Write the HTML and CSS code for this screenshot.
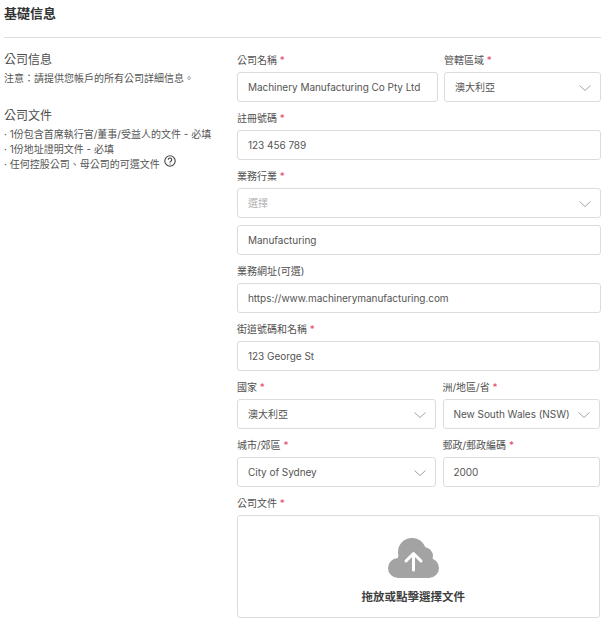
FILE: index.html
```html
<!DOCTYPE html>
<html lang="zh-Hant">
<head>
<meta charset="utf-8">
<title>基礎信息</title>
<link rel="stylesheet" href="styles.css">
</head>
<body>
<main class="page">
  <h1 class="title">基礎信息</h1>
  <div class="content">
    <aside class="info">
      <h2 class="info-head">公司信息</h2>
      <p class="info-text">注意：請提供您帳戶的所有公司詳細信息。</p>
      <h2 class="info-head second">公司文件</h2>
      <p class="info-text">· 1份包含首席執行官/董事/受益人的文件 - 必填</p>
      <p class="info-text">· 1份地址證明文件 - 必填</p>
      <p class="info-text">· 任何控股公司、母公司的可選文件
        <svg class="help" viewBox="0 0 12 12" width="12" height="12"><circle cx="6" cy="6" r="5.200" fill="none" stroke="#444" stroke-width="1.100"/><path d="M4.300 4.800a1.700 1.700 0 1 1 2.600 1.400c-.6.400-.9.800-.9 1.300" fill="none" stroke="#444" stroke-width="1.100"/><circle cx="6" cy="9.100" r=".6" fill="#444"/></svg>
      </p>
    </aside>
    <form class="form">
      <div class="row row-top">
        <div class="field"><label class="label">公司名稱 <em>*</em></label><div class="control">Machinery Manufacturing Co Pty Ltd</div></div>
        <div class="field"><label class="label">管轄區域 <em>*</em></label><div class="control select">澳大利亞<svg class="chev" viewBox="0 0 12 6"><path d="M.5.5 6 5.500 11.500.5"/></svg></div></div>
      </div>
      <div class="field"><label class="label">註冊號碼 <em>*</em></label><div class="control">123 456 789</div></div>
      <div class="field"><label class="label">業務行業 <em>*</em></label>
        <div class="control select muted tight">選擇<svg class="chev" viewBox="0 0 12 6"><path d="M.5.5 6 5.500 11.500.5"/></svg></div>
        <div class="control">Manufacturing</div>
      </div>
      <div class="field"><label class="label">業務網址(可選)</label><div class="control">https://www.machinerymanufacturing.com</div></div>
      <div class="narrow">
        <div class="field"><label class="label">街道號碼和名稱 <em>*</em></label><div class="control">123 George St</div></div>
        <div class="row row-low">
          <div class="field"><label class="label">國家 <em>*</em></label><div class="control select">澳大利亞<svg class="chev" viewBox="0 0 12 6"><path d="M.5.5 6 5.500 11.500.5"/></svg></div></div>
          <div class="field"><label class="label">洲/地區/省 <em>*</em></label><div class="control select">New South Wales (NSW)<svg class="chev" viewBox="0 0 12 6"><path d="M.5.5 6 5.500 11.500.5"/></svg></div></div>
        </div>
        <div class="row row-low">
          <div class="field"><label class="label">城市/郊區 <em>*</em></label><div class="control select">City of Sydney<svg class="chev" viewBox="0 0 12 6"><path d="M.5.5 6 5.500 11.500.5"/></svg></div></div>
          <div class="field"><label class="label">郵政/郵政編碼 <em>*</em></label><div class="control">2000</div></div>
        </div>
        <div class="field"><label class="label">公司文件 <em>*</em></label>
          <div class="upload">
            <svg class="cloud" viewBox="0 0 51 40" width="51" height="40"><g fill="#a3a3a3"><circle cx="10" cy="30" r="10"/><circle cx="24" cy="14" r="14"/><circle cx="36" cy="18" r="9"/><circle cx="41" cy="30" r="10"/><rect x="10" y="18" width="31" height="22"/></g><path fill="none" stroke="#fff" stroke-width="3" stroke-linecap="round" stroke-linejoin="round" d="M25.500 32V16M18 23l7.500-7.500L33 23"/></svg>
            <span class="upload-text">拖放或點擊選擇文件</span>
          </div>
        </div>
      </div>
    </form>
  </div>
</main>
</body>
</html>
```
FILE: styles.css
```css
* { box-sizing: border-box; }
html, body { margin: 0; padding: 0; background: #fff; }
body {
  font-family: Inter, "Noto Sans CJK TC", sans-serif;
  color: #555;
  font-size: 10px;
}
.page { width: 602px; height: 623px; padding: 0 1px 0 4px; overflow: hidden; }
.title {
  margin: 0;
  height: 38px;
  padding-top: 5px;
  font-size: 13px;
  line-height: 17px;
  font-weight: 700;
  color: #333;
  border-bottom: 1px solid #dedede;
}
.content { display: grid; grid-template-columns: 233px 364px; }
.info { padding-top: 14px; }
.info-head { margin: 0 0 3px; font-size: 12px; line-height: 16px; font-weight: 400; color: #4d4d4d; }
.info-head.second { margin-top: 22px; }
.info-text { margin: 0; font-size: 10px; line-height: 15px; color: #555; white-space: nowrap; }
.help { vertical-align: 1px; margin: -6px 0 0 1px; }
.form { display: flex; flex-direction: column; padding-top: 14px; }
.narrow { width: 362.500px; display: flex; flex-direction: column; }
.row { display: grid; }
.row-top { grid-template-columns: 200.500px 157px; column-gap: 6.500px; }
.row-low { grid-template-columns: 198.500px 157px; column-gap: 7px; }
.field { display: flex; flex-direction: column; }
.label { height: 20px; line-height: 17px; font-size: 10px; color: #505050; white-space: nowrap; }
.label em { font-style: normal; color: #e8486a; }
.control {
  position: relative;
  height: 30px;
  margin-bottom: 8px;
  padding-left: 10px;
  line-height: 28px;
  font-size: 10px;
  letter-spacing: -.04px;
  color: #555;
  background: #fff;
  border: 1px solid #dcdcdc;
  border-radius: 3px;
  white-space: nowrap;
}
.muted { color: #adadad; }
.tight { margin-bottom: 7px; }
.chev { position: absolute; right: 9px; top: 12px; width: 12px; height: 6px; fill: none; stroke: #8c8c8c; stroke-width: .8; }
.upload {
  height: 103px;
  padding: 22px 10px 0 0;
  border: 1px solid #dcdcdc;
  border-radius: 3px;
  display: flex;
  flex-direction: column;
  align-items: center;
}
.cloud { display: block; }
.upload-text { margin-top: 11px; font-size: 11.500px; line-height: 16px; font-weight: 700; color: #3f3f3f; }
```
